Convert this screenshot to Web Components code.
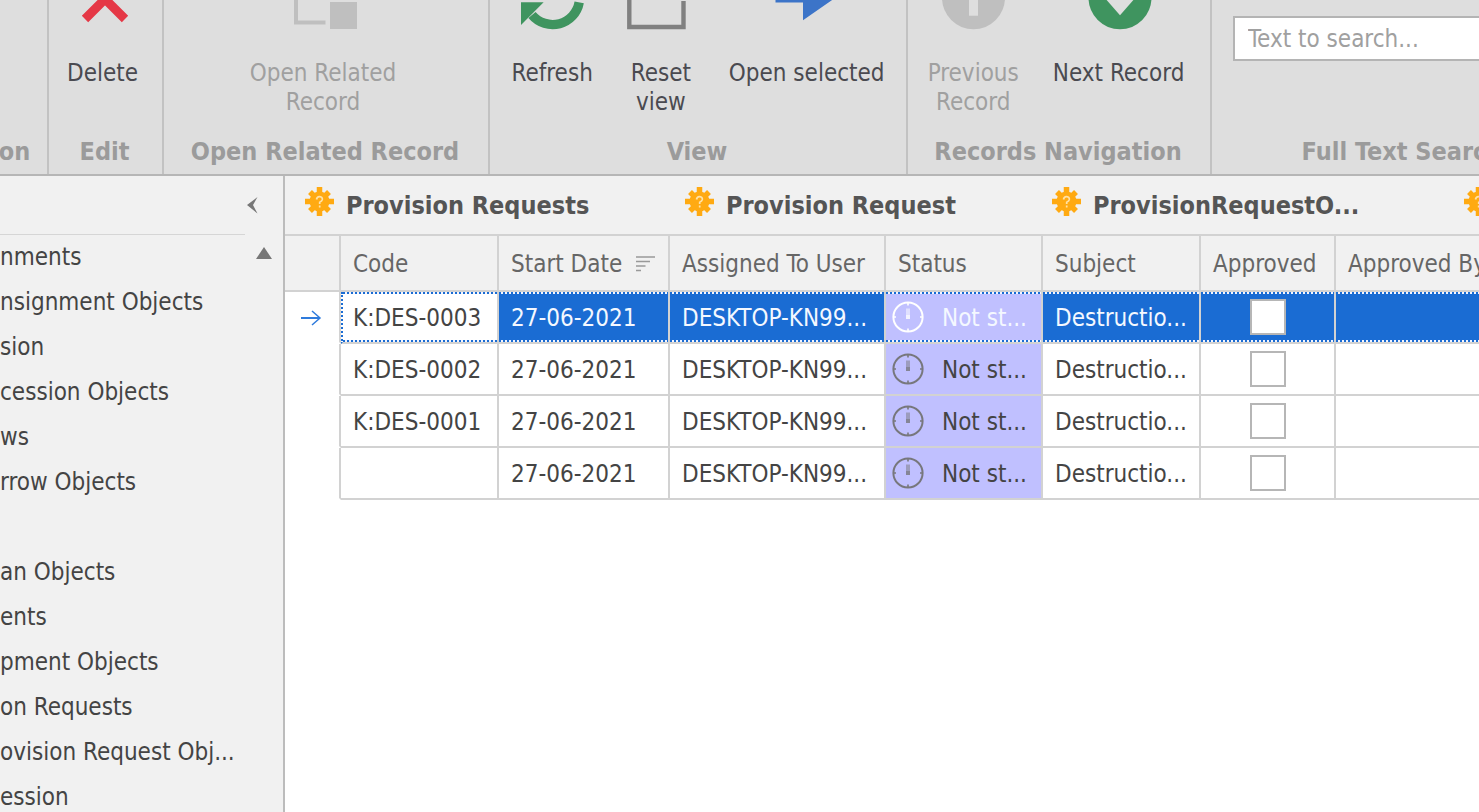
<!DOCTYPE html>
<html lang="en">
<head>
<meta charset="utf-8">
<title>Provision Requests</title>
<style>
  html, body { margin: 0; height: 100%; }
  body {
    font-family: "DejaVu Sans Condensed", "Noto Sans", Tahoma, sans-serif;
    font-size: 24px;
    line-height: 29px;
    color: #444;
    background: #fff;
    overflow: hidden;
  }
</style>
</head>
<body>
<records-app></records-app>

<script>
const define = (name, html, setup) => {
  const tpl = document.createElement('template');
  tpl.innerHTML = html;
  customElements.define(name, class extends HTMLElement {
    constructor() {
      super();
      this.attachShadow({ mode: 'open' }).append(tpl.content.cloneNode(true));
    }
    connectedCallback() { if (setup) setup(this, this.shadowRoot); }
  });
};

/* Large ribbon command: icon above a one or two line label */
define('ribbon-button', `
  <style>
    :host { display: block; }
    button {
      display: flex; flex-direction: column; align-items: center; gap: 29px;
      margin: 0; padding: 0; border: 0; background: none;
      font: inherit; color: #4a4a50; white-space: nowrap; text-align: center;
    }
    button:disabled { color: #a0a0a0; }
    .icon { height: 30px; width: 64px; }
  </style>
  <button type="button"><span class="icon"><slot name="icon"></slot></span><span><slot></slot></span></button>
`, (host, root) => { root.querySelector('button').disabled = host.hasAttribute('disabled'); });

/* Ribbon group with its caption at the bottom */
define('ribbon-group', `
  <style>
    :host {
      display: flex; flex-direction: column; justify-content: space-between;
      box-sizing: border-box; flex: none; overflow: hidden;
      border-right: 2px solid #c2c2c2; padding-bottom: 8px;
    }
    .items { display: flex; justify-content: center; gap: var(--gap, 34px); padding-right: var(--inset, 6px); }
    .caption { padding-right: 2px; text-align: center; font-weight: bold; font-size: 25px; color: #9b9b9b; white-space: nowrap; }
  </style>
  <div class="items"><slot></slot></div>
  <div class="caption"></div>
`, (host, root) => { root.querySelector('.caption').textContent = host.getAttribute('caption'); });

define('search-box', `
  <style>
    :host { display: block; flex: 1; padding: 16px 21px 0; }
    input {
      box-sizing: border-box; width: 100%; height: 45px; margin: 0; padding: 0 13px;
      border: 2px solid #b4b4b4; border-radius: 0; background: #fff; font: inherit; color: #444;
    }
    input::placeholder { color: #a0a0a0; opacity: 1; }
  </style>
  <input type="text" placeholder="Text to search..." aria-label="Text to search">
`);

define('app-ribbon', `
  <style>
    :host { display: flex; height: 174px; overflow: hidden; background: #dedede; border-bottom: 2px solid #b6b6b6; }
    .creation { width: 65px; margin-left: -16px; }
    .edit { width: 115px; }
    .related { width: 326px; }
    .view { width: 418px; --gap: 36px; --inset: 0; }
    .records { width: 304px; }
    .search { width: 384px; --inset: 0; }
    svg { display: block; width: 64px; height: 30px; overflow: visible; }
  </style>
  <ribbon-group class="creation" caption="on"></ribbon-group>
  <ribbon-group class="edit" caption="Edit">
    <ribbon-button>
      <svg slot="icon" viewBox="71 0 64 30"><path d="M85 19L105 -1L125 19" fill="none" stroke="#e53846" stroke-width="9"/></svg>
      Delete
    </ribbon-button>
  </ribbon-group>
  <ribbon-group class="related" caption="Open Related Record">
    <ribbon-button disabled>
      <svg slot="icon" viewBox="291 0 64 30"><path d="M296 -2V22.500H325.500" fill="none" stroke="#bfbfbf" stroke-width="4"/><path d="M330 2H357V29H330Z" fill="#bfbfbf"/></svg>
      Open Related<br>Record
    </ribbon-button>
  </ribbon-group>
  <ribbon-group class="view" caption="View">
    <ribbon-button>
      <svg slot="icon" viewBox="520 0 64 30"><path d="M579.200 2.400A27 27 0 0 1 532 15" fill="none" stroke="#3f945f" stroke-width="9.400"/><path d="M521 2.300H543.600L521 24.900Z" fill="#3f945f"/></svg>
      Refresh
    </ribbon-button>
    <ribbon-button>
      <svg slot="icon" viewBox="629 0 64 30"><path d="M629.300 -2V27H683.500V1" fill="none" stroke="#808080" stroke-width="4.400"/></svg>
      Reset<br>view
    </ribbon-button>
    <ribbon-button>
      <svg slot="icon" viewBox="775 0 64 30"><path d="M775.500 -2V2.500H803V20.300L835 -2Z" fill="#3c74c8"/></svg>
      Open selected
    </ribbon-button>
  </ribbon-group>
  <ribbon-group class="records" caption="Records Navigation">
    <ribbon-button disabled>
      <svg slot="icon" viewBox="941 0 64 30"><circle cx="973.500" cy="-2.200" r="31.500" fill="#bfbfbf"/><path d="M969 -2H978V15.700H969Z" fill="#dedede"/></svg>
      Previous<br>Record
    </ribbon-button>
    <ribbon-button>
      <svg slot="icon" viewBox="1087 0 64 30"><circle cx="1120" cy="-2.200" r="31.500" fill="#3f945f"/><path d="M1104 -3H1136L1120 15.300Z" fill="#dedede"/></svg>
      Next Record
    </ribbon-button>
  </ribbon-group>
  <ribbon-group class="search" caption="Full Text Search"><search-box></search-box></ribbon-group>
`);

define('nav-item', `
  <style>
    :host { display: block; height: 45px; }
    a { display: block; line-height: 45px; color: #444; text-decoration: none; white-space: nowrap; }
  </style>
  <a href="#"><slot></slot></a>
`);

define('side-nav', `
  <style>
    :host { display: flex; flex-direction: column; box-sizing: border-box; width: 285px; flex: none; overflow: hidden; background: #f1f1f1; border-right: 2px solid #bcbcbc; }
    header { display: flex; justify-content: flex-end; height: 59px; flex: none; }
    .rule { flex: 1; box-sizing: border-box; border-bottom: 1px solid #d6d6d6; }
    button { display: block; margin: 0; padding: 0; border: 0; background: none; }
    .fold { width: 38px; }
    .fold svg { display: block; }
    .list { display: flex; }
    nav { flex: 1; min-width: 0; }
    .scroll { width: 38px; height: 36px; }
    .scroll svg { display: block; margin: 0 auto; }
  </style>
  <header><div class="rule"></div>
    <button class="fold" type="button" aria-label="Collapse"><svg width="38" height="59" viewBox="0 0 38 59"><path d="M12.500 21L2 29L12.500 37.500L8 29Z" fill="#777"/></svg></button>
  </header>
  <div class="list">
    <nav>
      <nav-item>nments</nav-item>
      <nav-item>nsignment Objects</nav-item>
      <nav-item>sion</nav-item>
      <nav-item>cession Objects</nav-item>
      <nav-item>ws</nav-item>
      <nav-item>rrow Objects</nav-item>
      <nav-item></nav-item>
      <nav-item>an Objects</nav-item>
      <nav-item>ents</nav-item>
      <nav-item>pment Objects</nav-item>
      <nav-item>on Requests</nav-item>
      <nav-item>ovision Request Obj...</nav-item>
      <nav-item>ession</nav-item>
    </nav>
    <button class="scroll" type="button" aria-label="Scroll up"><svg width="16" height="36" viewBox="0 0 16 36"><path d="M0 24L8 12L16 24Z" fill="#777"/></svg></button>
  </div>
`);

define('doc-tab', `
  <style>
    :host { display: flex; align-items: center; gap: 12px; min-width: 0; font-weight: bold; font-size: 25px; color: #555; white-space: nowrap; }
    svg { flex: none; }
  </style>
  <svg width="29" height="37" viewBox="0 0 29 37">
    <g stroke="#ffaa12" stroke-width="5.500"><path d="M14.500 0V29M0 14.500H29M5 5L24 24M24 5L5 24"/></g>
    <circle cx="14.500" cy="14.500" r="10" fill="#ffaa12"/>
    <path d="M11.500 12.500Q12 9.500 14.800 9.700Q17.700 10 17.300 12.700Q17 14.300 14.700 15.300V17M14.700 18.500V20.500" fill="none" stroke="#ffe2a8" stroke-width="1.700"/>
  </svg>
  <span><slot></slot></span>
`);

define('tab-strip', `
  <style>
    :host { display: grid; grid-template-columns: 380px 367px 412px auto; box-sizing: border-box; height: 60px; padding-left: 20px; flex: none; overflow: hidden; background: #f1f1f1; border-bottom: 2px solid #d2d2d2; }
  </style>
  <doc-tab>Provision Requests</doc-tab><doc-tab>Provision Request</doc-tab><doc-tab>ProvisionRequestO...</doc-tab><doc-tab></doc-tab>
`);

define('status-cell', `
  <style>
    :host { display: flex; align-items: center; gap: 18px; }
    svg { flex: none; color: var(--icon, #77777c); }
    span { padding-top: 2px; }
  </style>
  <svg width="32" height="32" viewBox="0 0 32 32" fill="none" stroke="currentColor">
    <circle cx="16" cy="16" r="14.600" stroke-width="2"/>
    <path d="M16 2V4.500M16 27.500V30M2 16H4M28 16H30" stroke-width="1.600"/>
    <path d="M16 7.500V18" stroke-width="4" opacity=".5"/><path d="M16 14V18" stroke-width="4" opacity=".6"/>
  </svg>
  <span><slot></slot></span>
`);

define('data-grid', `
  <style>
    :host { display: block; overflow: hidden; flex: 1; background: #fff; }
    table { table-layout: fixed; width: 1271px; border-collapse: separate; border-spacing: 0; }
    .c0 { width: 56px; } .c1, .c5 { width: 158px; } .c2 { width: 171px; } .c3 { width: 216px; }
    .c4 { width: 157px; } .c6 { width: 135px; } .c7 { width: 220px; }
    th, td { box-sizing: border-box; padding: 2px 0 0 12px; border: 0 solid #d2d2d2; border-width: 0 2px 2px 0; text-align: left; white-space: nowrap; overflow: hidden; font-weight: normal; }
    th { height: 56px; background: #f1f1f1; color: #666; }
    td { height: 52px; color: #444; }
    td:first-child { border-bottom-color: #fff; padding-left: 15px; }
    td:first-child svg { display: block; }
    .head { display: flex; align-items: center; gap: 14px; }
    .status { background-color: #c0c0ff; padding: 0 0 0 6px; }
    .check { text-align: center; padding: 0; }
    input { appearance: none; display: block; box-sizing: border-box; width: 36px; height: 36px; margin: 0 auto; border: 2px solid #b6b6b6; background: #fff; }
    .selected td:not(:first-child) {
      --dots: repeating-linear-gradient(90deg, #1a6cd3 0 2px, #f4f6ff 2px 4px);
      color: #f4f8ff; background: var(--dots) top / 100% 2px no-repeat, var(--dots) bottom / 100% 2px no-repeat #1a6cd3;
      background-clip: padding-box;
    }
    .selected td.code { color: #444; background-color: #fff; border-left: 2px dotted #1a6cd3; padding-left: 10px; }
    .selected td.status { --icon: #fff; background-color: #c0c0ff; }
  </style>
  <table>
    <colgroup><col class="c0"><col class="c1"><col class="c2"><col class="c3"><col class="c4"><col class="c5"><col class="c6"><col class="c7"></colgroup>
    <thead><tr>
      <th></th><th>Code</th>
      <th><div class="head">Start Date<svg width="19" height="16" viewBox="0 0 19 16"><path d="M0 1H19M0 5.500H14M0 10H9.500M0 14.500H5" stroke="#999" stroke-width="1.600"/></svg></div></th>
      <th>Assigned To User</th><th>Status</th><th>Subject</th><th>Approved</th><th>Approved By</th>
    </tr></thead>
    <tbody></tbody>
  </table>
`, (host, root) => {
  const codes = ['K:DES-0003', 'K:DES-0002', 'K:DES-0001', ''];
  const marker = '<svg width="22" height="18" viewBox="0 0 22 18" fill="none" stroke="#2f7bdc"><path d="M1 9H20" stroke-width="2"/><path d="M12 2L20 9L12 16" stroke-width="1.500"/></svg>';
  root.querySelector('tbody').innerHTML = codes.map((code, i) => `
    <tr${i ? '' : ' class="selected"'}>
      <td>${i ? '' : marker}</td><td class="code">${code}</td><td>27-06-2021</td><td>DESKTOP-KN99...</td>
      <td class="status"><status-cell>Not st...</status-cell></td><td>Destructio...</td>
      <td class="check"><input type="checkbox" aria-label="Approved ${code}"></td><td></td>
    </tr>`).join('');
});

define('records-app', `
  <style>
    :host { display: flex; flex-direction: column; height: 100vh; }
    .body { display: flex; flex: 1; min-height: 0; }
    main { display: flex; flex-direction: column; flex: 1; min-width: 0; }
  </style>
  <app-ribbon></app-ribbon>
  <div class="body"><side-nav></side-nav><main><tab-strip></tab-strip><data-grid></data-grid></main></div>
`);
</script>
</body>
</html>
